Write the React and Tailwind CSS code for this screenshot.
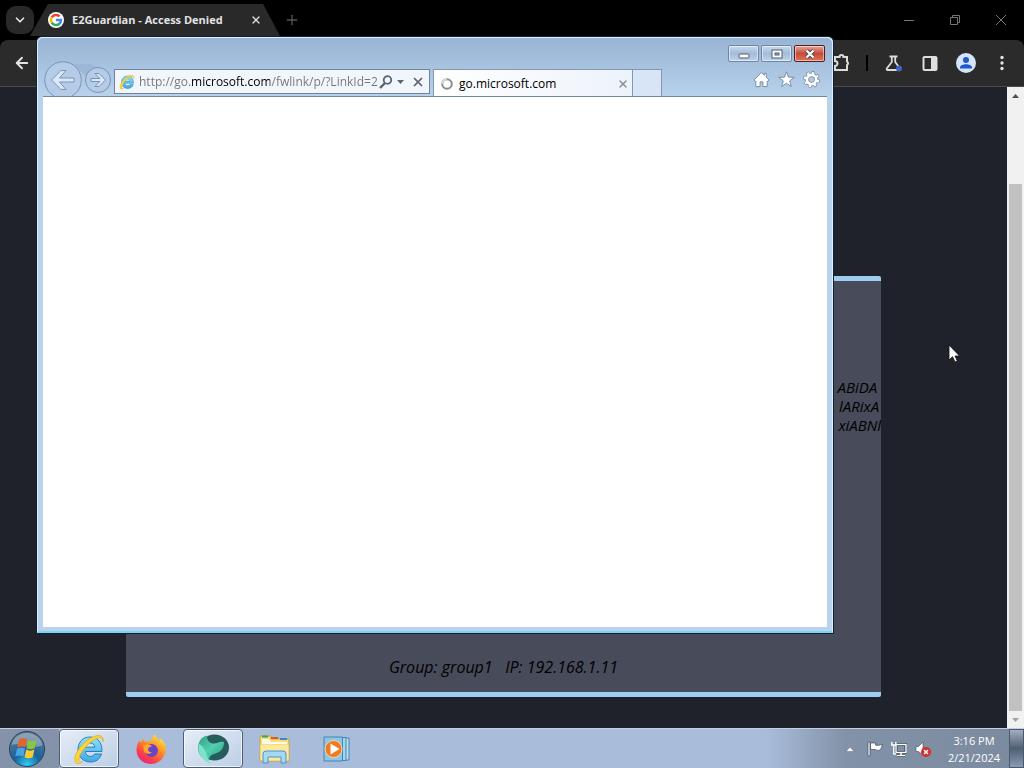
/**
 * App.jsx — Windows 7 desktop: Chrome at the back, IE window on top, taskbar.
 */
import { useState } from 'react'
import { ChevronDown, ArrowLeft, X, Plus } from 'lucide-react'

function GoogleMark() {
  return (
    <svg viewBox="0 0 18 18" className="size-4 shrink-0" fill="none" strokeWidth="2.8">
      <circle cx="9" cy="9" r="9" fill="#fff" />
      <path d="M4.200 6.100A5.600 5.600 0 0 1 13 5" stroke="#ea4335" />
      <path d="M4.200 6.100a5.600 5.600 0 0 0 0 5.800" stroke="#fbbc05" />
      <path d="M4.200 11.900a5.600 5.600 0 0 0 8.600 1.300" stroke="#34a853" />
      <path d="M9 9h5.600a5.600 5.600 0 0 1-1.800 4.200" stroke="#4285f4" />
    </svg>
  )
}

function IeMark({ className, id }) {
  return (
    <svg viewBox="0 0 32 32" className={className} fill="none">
      <defs>
        <linearGradient id={id} x1="0" y1="0" x2="0" y2="1">
          <stop offset="0" stopColor="#8fe1fb" />
          <stop offset="1" stopColor="#3fa9e2" />
        </linearGradient>
      </defs>
      <path fill={`url(#${id})`} stroke="#1b77b8" strokeWidth="0.9" fillRule="evenodd"
        d="M17 4C9.500 4 5 9.500 5 16.500S10 29 17.500 29c5.500 0 9.500-3 11-8h-6.800c-.9 1.600-2.300 2.400-4.200 2.400-3 0-4.900-1.700-5.100-4.900h16.500C29.500 9.500 24.500 4 17 4Zm-4.500 10.200c.5-2.800 2.200-4.200 4.700-4.200s4.200 1.500 4.600 4.200Z" />
      <path fill="#fcd535" stroke="#d9a514" strokeWidth="0.6"
        d="M30 9c1-4-1-7-5.500-6.500C17 3.500 7 12 3 21c-2 5-1.500 9.500 2 9.500 1.500 0 3-.6 4.500-1.600-3 .8-4.400-1-3.300-4.500C8.500 17 17.500 7.500 24.500 5.200 28 4 29.800 5.300 30 9Z" />
    </svg>
  )
}

function PuzzleIcon() {
  return (
    <svg viewBox="0 0 20 20" className="size-5" fill="none" stroke="#dcdcdc" strokeWidth="2">
      <path d="M3 4h4.500a2 2 0 0 1 4 0H15v4.500a2 2 0 0 1 0 3.500v5H3v-4a2.500 2.500 0 0 0 0-5Z" />
    </svg>
  )
}

function FlaskIcon() {
  return (
    <svg viewBox="0 0 20 20" className="size-5" fill="none">
      <path d="M5.500 3.500h8M7.800 3.500V9l-5 6.500c-.4.700 0 1.500.8 1.500h11.600c.8 0 1.200-.8.8-1.500L11.200 9V3.500"
        stroke="#dcdcdc" strokeWidth="1.800" />
      <circle cx="15" cy="15.500" r="3" fill="#4263c4" />
    </svg>
  )
}

function SidePanelIcon() {
  return (
    <svg viewBox="0 0 20 20" className="size-5">
      <rect x="3.500" y="4" width="13" height="13" rx="1" fill="none" stroke="#dedede" strokeWidth="2" />
      <path d="M11 4h6v13h-6z" fill="#dedede" />
    </svg>
  )
}

function AvatarIcon() {
  return (
    <svg viewBox="0 0 20 20" className="size-5">
      <circle cx="10" cy="10" r="10" fill="#d5e3fb" />
      <circle cx="10" cy="7" r="3" fill="#1f56c9" />
      <path d="M4 15.500v-1c0-2.300 3.500-3.300 6-3.300s6 1 6 3.300v1Z" fill="#1f56c9" />
    </svg>
  )
}

function ChromeTabs() {
  return (
    <div className="flex h-10 shrink-0 items-start bg-black text-[#e3e3e3]">
      <button aria-label="Search tabs"
        className="ml-1.5 mt-1.5 flex size-7 shrink-0 items-center justify-center rounded-[10px] bg-[#292929]">
        <ChevronDown className="size-3.5" strokeWidth={3} />
      </button>
      <div className="-ml-1 mt-1 flex h-8 w-[250px] shrink-0 items-center bg-[#292929] pl-[18px] pr-[18px] [clip-path:polygon(18px_0,233px_0,250px_100%,0_100%)]">
        <GoogleMark />
        <span className="ml-2 flex-1 whitespace-nowrap text-[11px] font-bold">E2Guardian - Access Denied</span>
        <button aria-label="Close tab"><X className="size-3" strokeWidth={2.5} /></button>
      </div>
      <button aria-label="New tab" className="ml-1 mt-3 text-[#555]"><Plus className="size-4" /></button>
      <div className="ml-auto flex text-[#777]">
        <button aria-label="Minimize" className="flex h-10 w-[46px] items-center justify-center">
          <svg viewBox="0 0 10 10" className="size-2.5" stroke="currentColor"><path d="M0 5.500h10" /></svg>
        </button>
        <button aria-label="Restore" className="flex h-10 w-[46px] items-center justify-center">
          <svg viewBox="0 0 10 10" className="size-2.5" fill="none" stroke="currentColor">
            <path d="M.5 2.500h7v7h-7zM2.500 2.500v-2h7v7h-2" />
          </svg>
        </button>
        <button aria-label="Close" className="flex h-10 w-[46px] items-center justify-center">
          <svg viewBox="0 0 10 10" className="size-2.5" stroke="currentColor"><path d="M0 0l10 10M10 0L0 10" /></svg>
        </button>
      </div>
    </div>
  )
}

function ChromeToolbar() {
  return (
    <div className="shrink-0 bg-black">
      <div className="flex h-[47px] items-center rounded-t-lg border-b border-[#4c4c4c] bg-[#2b2b2b] px-3 text-[#e3e3e3]">
        <button aria-label="Back" className="ml-px"><ArrowLeft className="size-4.5" strokeWidth={2.5} /></button>
        <div className="ml-auto flex items-center">
          <button aria-label="Extensions"><PuzzleIcon /></button>
          <span className="ml-3.5 h-4 w-0.5 bg-black" />
          <button aria-label="Labs" className="ml-4"><FlaskIcon /></button>
          <button aria-label="Side panel" className="ml-4"><SidePanelIcon /></button>
          <button aria-label="Profile" className="ml-4"><AvatarIcon /></button>
          <button aria-label="Menu" className="ml-4">
            <svg viewBox="0 0 20 20" className="size-5" fill="#e3e3e3">
              <circle cx="10" cy="4.500" r="1.700" /><circle cx="10" cy="10" r="1.700" /><circle cx="10" cy="15.500" r="1.700" />
            </svg>
          </button>
        </div>
      </div>
    </div>
  )
}

function BlockedPage() {
  return (
    <div className="flex min-h-0 flex-1 bg-[#1f222a]">
      <main className="flex flex-1 justify-center pb-[31px] pt-[189px]">
        <div className="flex w-3/4 flex-col overflow-hidden rounded-xs border-y-5 border-[#9fcdf2] bg-[#474b5a] italic text-black">
          <div className="mt-[97px] text-right text-[15px] leading-[19px]">
            <p className="pr-1">ABiDA</p>
            <p className="pr-0.5">lARixA</p>
            <p>xiABNl</p>
          </div>
          <p className="mb-3.5 mt-auto whitespace-pre text-center text-base leading-[22px]">Group: group1   IP: 192.168.1.11</p>
        </div>
      </main>
      <div className="flex w-[17px] shrink-0 flex-col items-center bg-[#f1f1f1]">
        <svg viewBox="0 0 17 17" className="size-[17px] shrink-0"><path d="M5 11h7L8.500 7Z" fill="#505050" /></svg>
        <div className="mt-20 w-[13px] flex-1 bg-[#c1c1c1]" />
        <svg viewBox="0 0 17 17" className="size-[17px] shrink-0"><path d="M5 7h7l-3.500 4Z" fill="#a3a3a3" /></svg>
      </div>
    </div>
  )
}

function CaptionButton({ label, danger, children }) {
  return (
    <button aria-label={label}
      className={`flex h-[17px] w-[31px] items-center justify-center rounded-xs border shadow-[inset_0_0_0_1px_rgba(255,255,255,0.5)] ${
        danger
          ? 'border-[#5c1a1f] bg-linear-to-b from-[#e3a79d] via-[#c64a38] to-[#d9765c]'
          : 'border-[#6f87a6] bg-linear-to-b from-[#c9dbef] via-[#a3bcd9] to-[#bfd4eb]'
      }`}>
      {children}
    </button>
  )
}

function IeWindow() {
  const [url, setUrl] = useState('http://go.microsoft.com/fwlink/p/?LinkId=2')

  return (
    <section aria-label="Internet Explorer"
      className="absolute bottom-[134px] left-9 right-[190px] top-9 flex flex-col rounded-t-md border border-[#10203a] bg-[#b7d3ee] text-xs text-black">
      <div className="flex flex-1 flex-col rounded-t-md border border-b-2 border-[#dff1fd] border-b-[#79d5ef] bg-linear-to-b from-[#98b4d3] to-[#b9d3ec] to-[60px] px-[5px] pb-1">

        {/* Caption buttons */}
        <div className="flex h-6 items-end justify-end gap-0.5 pr-0.5">
          <CaptionButton label="Minimize">
            <svg viewBox="0 0 12 10" className="h-2.5 w-3"><rect x="1" y="5" width="10" height="4" rx="1" fill="#fff" stroke="#4e5d72" /></svg>
          </CaptionButton>
          <CaptionButton label="Maximize">
            <svg viewBox="0 0 12 10" className="h-2.5 w-3"><rect x="1" y="1" width="10" height="8" fill="#fff" stroke="#4e5d72" /><rect x="4" y="4" width="4" height="2" fill="#9db4d0" stroke="#4e5d72" /></svg>
          </CaptionButton>
          <CaptionButton label="Close" danger>
            <svg viewBox="0 0 12 10" className="h-2.5 w-3"><path d="M2.500 1.500l7 7M9.500 1.500l-7 7" stroke="#53434c" strokeWidth="4" /><path d="M2.500 1.500l7 7M9.500 1.500l-7 7" stroke="#fff" strokeWidth="2.200" /></svg>
          </CaptionButton>
        </div>

        {/* Navigation, address and tabs */}
        <div className="flex h-[35px] items-end border-b border-[#7187a3]">
          <svg viewBox="0 0 70 34" className="h-[34px] w-[70px] shrink-0 overflow-visible" fill="#b4cce7" stroke="#7b93b3">
            <path d="M30 2h18l8 5-10 10Z" fill="#9db7d6" stroke="none" />
            <path d="M11 34A18.300 18.300 0 1 1 29 34" />
            <circle cx="55" cy="18" r="12.500" />
            <path d="M8.500 18l9.500-9.500h5L16.500 16H31v4H16.500l6.500 7.500h-5Z" fill="#dbe8f7" />
            <path d="M62.500 18L56 11.500h-4l5 5H48v3h9l-5 5h4Z" fill="#dbe8f7" />
          </svg>
          <div className="mb-0.5 ml-px flex h-[25px] w-[316px] shrink-0 items-center border border-[#71839b] bg-[#f1f6fc] pl-1">
            <IeMark id="ie-address" className="size-4 shrink-0" />
            <input aria-label="Address" value={url} onChange={(e) => setUrl(e.target.value)}
              className="ml-1 min-w-0 flex-1 bg-linear-[90deg,#757575_52px,#000_52px,#000_131px,#757575_131px] bg-clip-text text-transparent caret-black outline-none" />
            <button aria-label="Search">
              <svg viewBox="0 0 14 14" className="size-3.5" fill="none" stroke="#5c6370" strokeWidth="1.800"><circle cx="8.500" cy="5" r="3.800" /><path d="M6 8l-5 5" strokeWidth="2.400" /></svg>
            </button>
            <button aria-label="Show address list" className="ml-1 mr-1.5">
              <svg viewBox="0 0 8 4" className="h-1 w-2"><path d="M0 0h7L3.500 4Z" fill="#5c6370" /></svg>
            </button>
            <button aria-label="Stop" className="mr-1"><X className="size-3.5 text-[#5c6370]" strokeWidth={3} /></button>
          </div>
          <div className="ml-[3px] flex h-[27px] w-[200px] shrink-0 items-center border border-b-0 border-[#8397b1] bg-linear-to-r from-white to-[#edf3fb] px-[7px] pt-0.5">
            <svg viewBox="0 0 12 12" className="size-3" fill="none" strokeWidth="2"><circle cx="6" cy="6" r="4.800" stroke="#8b8b8b" /><path d="M1.200 6A4.800 4.800 0 0 1 6 1.200" stroke="#d4d4d4" /></svg>
            <span className="ml-1.5 flex-1">go.microsoft.com</span>
            <button aria-label="Close tab" className="-mr-1"><X className="size-3 text-[#8b8f96]" strokeWidth={3} /></button>
          </div>
          <button aria-label="New tab" className="h-[27px] w-[29px] shrink-0 border border-b-0 border-l-0 border-[#8397b1] bg-[#d7e5f6]" />
          <div className="mb-2 ml-auto mr-[7px] flex gap-2">
            <button aria-label="Home">
              <svg viewBox="0 0 18 18" className="size-[17px]" fill="#fff" stroke="#7589a5"><path d="M9 1.500L1 9.500l1.500 1.500.5-.4V16.500h4.500v-5h3v5H15v-5.900l.5.400L17 9.500l-3-3V2.500h-2v2Z" /></svg>
            </button>
            <button aria-label="Favorites">
              <svg viewBox="0 0 18 18" className="size-[17px]" fill="#fff" stroke="#7589a5"><path d="M9 .8l2.100 5.700 6.200.2-4.900 3.800 1.700 6L9 13l-5.100 3.500 1.700-6L.7 6.700l6.200-.2Z" /></svg>
            </button>
            <button aria-label="Tools">
              <svg viewBox="0 0 18 18" className="size-[17px]" fill="none">
                <circle cx="9" cy="9" r="7.300" stroke="#7589a5" strokeWidth="3.200" strokeDasharray="3.200 2.533" />
                <circle cx="9" cy="9" r="5" stroke="#7589a5" strokeWidth="4.500" />
                <circle cx="9" cy="9" r="7" stroke="#fff" strokeWidth="2.200" strokeDasharray="2.400 3.098" strokeDashoffset="-.4" />
                <circle cx="9" cy="9" r="4.900" stroke="#fff" strokeWidth="2.800" />
              </svg>
            </button>
          </div>
        </div>

        <div className="flex-1 bg-white" />
      </div>
    </section>
  )
}

function StartOrb() {
  return (
    <svg viewBox="0 0 38 38" className="size-[38px]">
      <defs>
        <radialGradient id="orb" cx="0.5" cy="0.95" r="0.85">
          <stop offset="0" stopColor="#2fd0f2" />
          <stop offset="0.45" stopColor="#17639c" />
          <stop offset="1" stopColor="#5d7893" />
        </radialGradient>
      </defs>
      <circle cx="19" cy="19" r="17.500" fill="url(#orb)" stroke="#24405e" />
      <path d="M3.500 15A16 16 0 0 1 34.500 15C28 20 11 12 3.500 15Z" fill="#fff" opacity="0.3" />
      <path d="M11 9.500c3-1.600 5.500-1.500 8 0l-1.700 8c-2.500-1.400-5-1.400-8 0Z" fill="#e8622c" />
      <path d="M20.200 10.200c2.700 1.400 5.300 1.400 8.300 0l-1.800 8c-3 1.400-5.500 1.400-8.200 0Z" fill="#8cc63f" />
      <path d="M9 18.800c3-1.500 5.500-1.400 8 0l-1.700 7.700c-2.500-1.400-5-1.400-8 0Z" fill="#4aa5e6" />
      <path d="M18.200 19.600c2.700 1.400 5.200 1.400 8.200 0l-1.700 7.700c-3 1.400-5.500 1.400-8.200 0Z" fill="#fccb2f" />
    </svg>
  )
}

function FirefoxMark() {
  return (
    <svg viewBox="0 0 32 32" className="size-8">
      <defs>
        <linearGradient id="fox" x1="0.85" y1="0" x2="0.2" y2="1">
          <stop offset="0" stopColor="#fff14a" />
          <stop offset="0.4" stopColor="#ff9525" />
          <stop offset="0.75" stopColor="#fb3f48" />
          <stop offset="1" stopColor="#e0218a" />
        </linearGradient>
      </defs>
      <path fill="url(#fox)" d="M20 1c.5 3 2 4.500 4 6l2-1.500c4 4 5.500 8.500 4.500 13.500C29 26 23 31 16 31 8 31 1.500 25 1.500 17c0-4 1.300-7.500 3-9.500L6 10l1.500-4 3.500 3c2.500-1 4-1 5 0C16 6 17.500 3 20 1Z" />
      <circle cx="16.500" cy="17.500" r="6.500" fill="#6945c9" />
      <path d="M8 12c4-1.500 7-1 9 1.500-3 .2-4 1.500-4 3 0 2 2 3 4 2.500-2 3-7 2-8-1Z" fill="#ffa62b" />
    </svg>
  )
}

function GreenOrb() {
  return (
    <svg viewBox="0 0 34 34" className="size-[34px]">
      <defs>
        <linearGradient id="leaf" x1="0" y1="0" x2="1" y2="1">
          <stop offset="0" stopColor="#2f9c86" />
          <stop offset="0.5" stopColor="#52d0ae" />
          <stop offset="1" stopColor="#2b9a80" />
        </linearGradient>
      </defs>
      <ellipse cx="18.500" cy="15.500" rx="14.500" ry="13" fill="#275c5c" />
      <path d="M2 16C2 10 5 5 11 3.500c0 5 2 7.500 6 8 4 .5 6-2.500 11-1.500 0 6-3 10-8.500 11.500-4.500 1-6.500 3-6.500 7C7 28 2 23 2 16Z" fill="url(#leaf)" />
      <path d="M3 12c5 2 7 8 8.500 13 .7 2.500 1.500 4 3.500 7C7 29 1 21 3 12Z" fill="#7fe3cb" />
    </svg>
  )
}

function ExplorerMark() {
  return (
    <svg viewBox="0 0 34 32" className="h-8 w-[34px]">
      <path d="M2 3h11v3h18v22H2Z" fill="#f6dc7d" stroke="#c9a23e" />
      <path d="M4 3.500h6" stroke="#3ba551" strokeWidth="2" />
      <path d="M13 5h7" stroke="#d9562f" strokeWidth="2" />
      <path d="M22 6h7" stroke="#3f86d1" strokeWidth="2" />
      <path d="M4 6h7l2 3h16v2H4Z" fill="#fffbe9" />
      <path d="M2.500 12h28v15.500h-28Z" fill="#fae99f" />
      <path d="M5 30V21q0-3 3-3h17q3 0 3 3v9h-5v-6H10v6Z" fill="#a5d8f3" stroke="#4c94c4" />
    </svg>
  )
}

function MediaMark() {
  return (
    <svg viewBox="0 0 30 28" className="h-7 w-[30px]">
      <path d="M8 3h19v22H8Z" fill="#bfe0f2" stroke="#3c87b5" />
      <path d="M5 2.500h19v23H5Z" fill="#a6d3ec" stroke="#3c87b5" />
      <path d="M2 2h18.500v24H2Z" fill="#8dc5e6" stroke="#3c87b5" />
      <circle cx="11.500" cy="14" r="8.500" fill="#ee7a23" stroke="#fbd5a5" />
      <path d="M8.500 8.500v11l9-5.500Z" fill="#fff" />
    </svg>
  )
}

function TaskButton({ label, active, children }) {
  return (
    <button aria-label={label}
      className={`flex h-[39px] w-[60px] items-center justify-center rounded-sm border ${
        active
          ? 'border-[#4e5f78] bg-linear-to-br from-[#e6edf6] to-[#bccee6] shadow-[inset_0_0_0_1px_rgba(255,255,255,0.7)]'
          : 'border-transparent'
      }`}>
      {children}
    </button>
  )
}

function Taskbar() {
  return (
    <footer className="flex h-10 shrink-0 border-t border-[#c4d0df] bg-linear-to-r from-[#8493a9] to-[#7b8a9e]">
      <button aria-label="Start" className="flex h-[39px] w-[54px] shrink-0 items-center justify-center">
        <StartOrb />
      </button>
      <nav className="ml-[5px] flex flex-1 gap-0.5 bg-linear-to-r from-[#a9bddb] from-90% to-[#8292a8]">
        <TaskButton label="Internet Explorer" active><IeMark id="ie-task" className="size-8" /></TaskButton>
        <TaskButton label="Firefox"><FirefoxMark /></TaskButton>
        <TaskButton label="Web browser" active><GreenOrb /></TaskButton>
        <TaskButton label="Windows Explorer"><ExplorerMark /></TaskButton>
        <TaskButton label="Media Player"><MediaMark /></TaskButton>
      </nav>
      <div className="flex items-center gap-2 bg-linear-to-r from-[#8292a8] to-[#7b8a9e] text-white">
        <button aria-label="Show hidden icons">
          <svg viewBox="0 0 10 6" className="mr-1 h-1.5 w-2.5"><path d="M1 5.500h8L5 1Z" fill="#fff" stroke="#5a6a80" strokeWidth="0.500" /></svg>
        </button>
        <button aria-label="Action Center">
          <svg viewBox="0 0 16 16" className="size-4" stroke="#3c4a5d" strokeWidth="0.700"><path d="M1 1h2v14H1ZM3.500 2h5v2c2 1 4 0 7-.5-1 2-1 4-2.500 5.500-2 .7-3 .5-4.500-.5h-5Z" fill="#fff" /></svg>
        </button>
        <button aria-label="Network">
          <svg viewBox="0 0 16 16" className="size-4" fill="none"><path d="M5 3.500h10v8H5ZM10 11.500v3M6 14.500h8" stroke="#2f3d50" strokeWidth="3" /><path d="M5 3.500h10v8H5ZM10 11.500v3M6 14.500h8" stroke="#fff" strokeWidth="1.400" /><path d="M.8 1v3h4V1M2.800 4v9H5" stroke="#fff" strokeWidth="1.400" /></svg>
        </button>
        <button aria-label="Volume">
          <svg viewBox="0 0 16 16" className="size-4"><path d="M1 5.500h2.500L8 1v13L3.500 10.500H1Z" fill="#fff" stroke="#3c4a5d" strokeWidth="0.600" /><circle cx="11" cy="11" r="5" fill="#d32f2a" /><path d="M9 9l4 4M13 9l-4 4" stroke="#fff" strokeWidth="1.500" /></svg>
        </button>
        <time className="ml-2 w-[54px] whitespace-nowrap text-center text-[11px] leading-[17px]">
          3:16 PM<br />2/21/2024
        </time>
        <button aria-label="Show desktop"
          className="h-full w-[15px] border border-[#485870] bg-linear-to-b from-[#a3afbf] via-[#4f5f74] to-[#8b9bb0]" />
      </div>
    </footer>
  )
}

export default function App() {
  return (
    <div className="relative flex h-screen flex-col overflow-hidden font-['Open_Sans',sans-serif]">
      <ChromeTabs />
      <ChromeToolbar />
      <BlockedPage />
      <Taskbar />
      <IeWindow />

      {/* Mouse pointer */}
      <svg viewBox="0 0 12 19" className="absolute left-[948px] top-[344px] h-[19px] w-3">
        <path d="M1 1v15l3.500-3.300L7 18l2.300-1L7 12h4.500Z" fill="#fff" stroke="#111" strokeWidth="0.800" />
      </svg>
    </div>
  )
}
